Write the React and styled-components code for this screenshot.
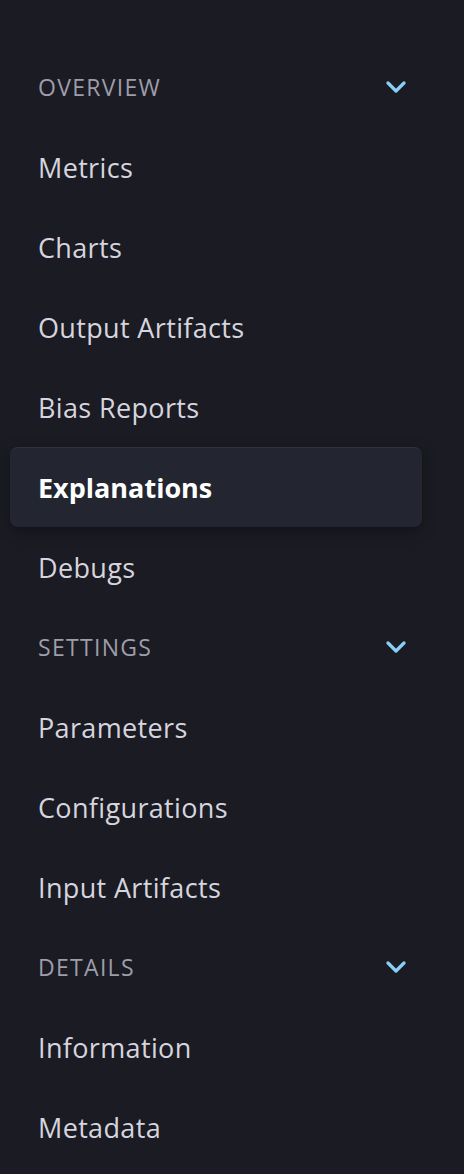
import React from "react";
import styled, { createGlobalStyle } from "styled-components";

const Global = createGlobalStyle`
  html, body { margin: 0; padding: 0; background: #1b1b23; }
  body { font-family: "Open Sans", "Noto Sans", sans-serif; }
`;

const Nav = styled.nav`
  width: 464px;
  min-height: 1174px;
  box-sizing: border-box;
  padding: 47px 42px 0 10px;
  background: #1b1b23;
  display: flex;
  flex-direction: column;
`;

const Row = styled.div`
  height: 80px;
  box-sizing: border-box;
  padding: 0 16px 0 28px;
  display: flex;
  align-items: center;
  justify-content: space-between;
  border-radius: 8px;
  font-size: 27px;
  letter-spacing: ${(p) => (p.$active ? "0" : "0.35px")};
  color: ${(p) => (p.$active ? "#ffffff" : "#d6d5df")};
  font-weight: ${(p) => (p.$active ? 700 : 500)};
  background: ${(p) => (p.$active ? "#232530" : "transparent")};
  border-top: ${(p) => (p.$active ? "1px solid #30323c" : "none")};
  box-shadow: ${(p) => (p.$active ? "0 4px 14px rgba(0,0,0,0.35)" : "none")};
`;

const Heading = styled(Row)`
  font-size: 23px;
  font-weight: 500;
  letter-spacing: 1.3px;
  color: #9e9daa;
  text-transform: uppercase;
`;

const Chevron = () => (
  <svg width="20" height="12" viewBox="0 0 20 12" fill="none">
    <path d="M2 2 L10 10 L18 2" stroke="#8ccdf8" strokeWidth="3.2" strokeLinecap="round" strokeLinejoin="round" />
  </svg>
);

const sections = [
  { title: "Overview", items: ["Metrics", "Charts", "Output Artifacts", "Bias Reports", "Explanations", "Debugs"] },
  { title: "Settings", items: ["Parameters", "Configurations", "Input Artifacts"] },
  { title: "Details", items: ["Information", "Metadata"] },
];

export default function App() {
  return (
    <>
      <Global />
      <Nav>
        {sections.map((s) => (
          <React.Fragment key={s.title}>
            <Heading>
              <span>{s.title}</span>
              <Chevron />
            </Heading>
            {s.items.map((it) => (
              <Row key={it} $active={it === "Explanations"}>
                {it}
              </Row>
            ))}
          </React.Fragment>
        ))}
      </Nav>
    </>
  );
}
